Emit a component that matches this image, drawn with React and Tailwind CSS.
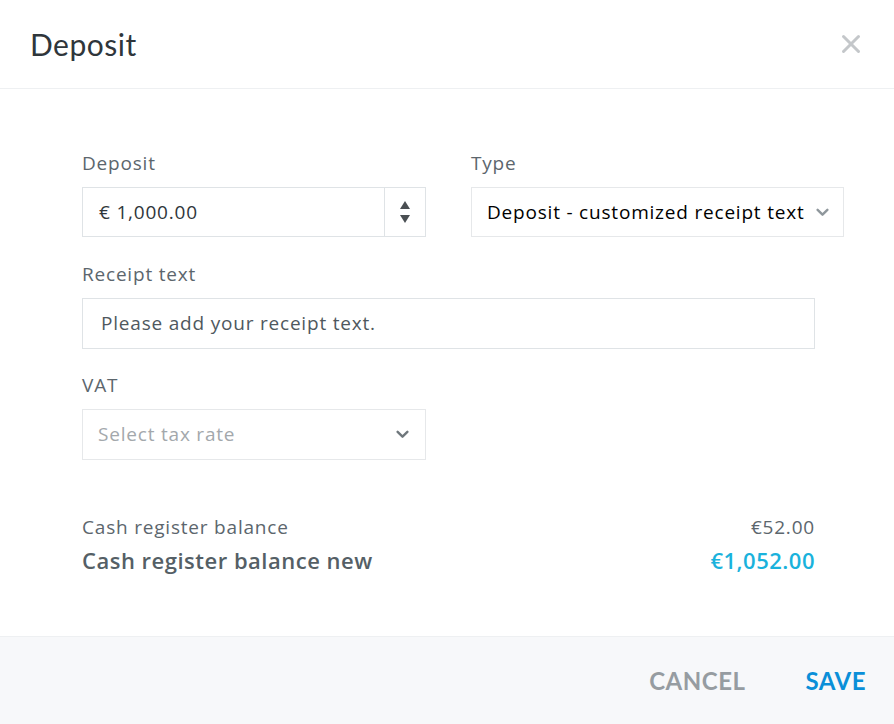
import { X } from "lucide-react";

const Chevron = ({ className }) => (
  <svg viewBox="0 0 12 8" className={className} fill="none" stroke="currentColor" strokeWidth={2.2} strokeLinecap="round" strokeLinejoin="round">
    <path d="M1.5 1.5L6 6l4.5-4.5" />
  </svg>
);

export default function App() {
  return (
    <div
      className="w-[894px] h-[724px] bg-white flex flex-col text-[#5c666d] tracking-[0.8px]"
      style={{ fontFamily: "'Open Sans', Lato, sans-serif" }}
    >
      {/* Header */}
      <div className="h-[89px] flex items-center justify-between pl-[30px] pr-[28px] border-b border-[#eef0f2] shrink-0">
        <h1 className="text-[30px] tracking-[0.5px] text-[#2f363b] font-normal" style={{ fontFamily: "Lato, sans-serif" }}>
          Deposit
        </h1>
        <X className="w-[30px] h-[30px] text-[#c4c7ca]" strokeWidth={2.4} />
      </div>

      {/* Body */}
      <div className="flex-1 pl-[82px] pr-[50px] pt-[62px]">
        <div className="flex gap-[45px]">
          <div className="w-[344px]">
            <label className="block text-[19px] leading-[24px] mb-[12px]">Deposit</label>
            <div className="h-[50px] border border-[#dfe3e6] flex">
              <div className="flex-1 flex items-center pl-[16px] text-[19px] text-[#2f363b]">€ 1,000.00</div>
              <div className="w-[41px] border-l border-[#dfe3e6] flex flex-col items-center justify-center gap-[6px] text-[#4a4f53]">
                <svg viewBox="0 0 10 8" className="w-[10px] h-[8px]" fill="currentColor"><path d="M5 0L10 8H0z" /></svg>
                <svg viewBox="0 0 10 8" className="w-[10px] h-[8px]" fill="currentColor"><path d="M0 0h10L5 8z" /></svg>
              </div>
            </div>
          </div>
          <div className="w-[373px]">
            <label className="block text-[19px] leading-[24px] mb-[12px]">Type</label>
            <div className="h-[50px] border border-[#e6e8ea] flex items-center justify-between pl-[15px] pr-[14px]">
              <span className="text-[19px] text-black whitespace-nowrap">Deposit - customized receipt text</span>
              <Chevron className="w-[13px] h-[9px] text-[#8f979c] shrink-0" />
            </div>
          </div>
        </div>

        <label className="block text-[19px] leading-[24px] mt-[25px] mb-[12px]">Receipt text</label>
        <div className="w-[733px] h-[51px] border border-[#dfe3e6] flex items-center pl-[18px] text-[19px] text-[#4f585e]">
          Please add your receipt text.
        </div>

        <label className="block text-[19px] leading-[24px] mt-[24px] mb-[12px]">VAT</label>
        <div className="w-[344px] h-[51px] border border-[#e6e8ea] flex items-center justify-between pl-[15px] pr-[16px]">
          <span className="text-[19px] text-[#a3a8ac]">Select tax rate</span>
          <Chevron className="w-[13px] h-[9px] text-[#6f777c]" />
        </div>

        <div className="w-[733px] mt-[55px]">
          <div className="flex justify-between items-center text-[19px] leading-[24px]">
            <span>Cash register balance</span>
            <span>€52.00</span>
          </div>
          <div className="flex justify-between items-center mt-[7px] text-[22px] leading-[28px] font-semibold tracking-[0.5px]">
            <span className="text-[#555f66]">Cash register balance new</span>
            <span className="text-[#1ab2dc]">€1,052.00</span>
          </div>
        </div>
      </div>

      {/* Footer */}
      <div className="h-[88px] bg-[#f7f8fa] border-t border-[#eef0f2] flex items-center justify-end pr-[28px] gap-[60px] shrink-0" style={{ fontFamily: "Lato, sans-serif" }}>
        <button className="text-[24px] font-bold text-[#969ca1] tracking-[0.5px]">CANCEL</button>
        <button className="text-[24px] font-bold text-[#0a8fd8] tracking-[0.5px]">SAVE</button>
      </div>
    </div>
  );
}
